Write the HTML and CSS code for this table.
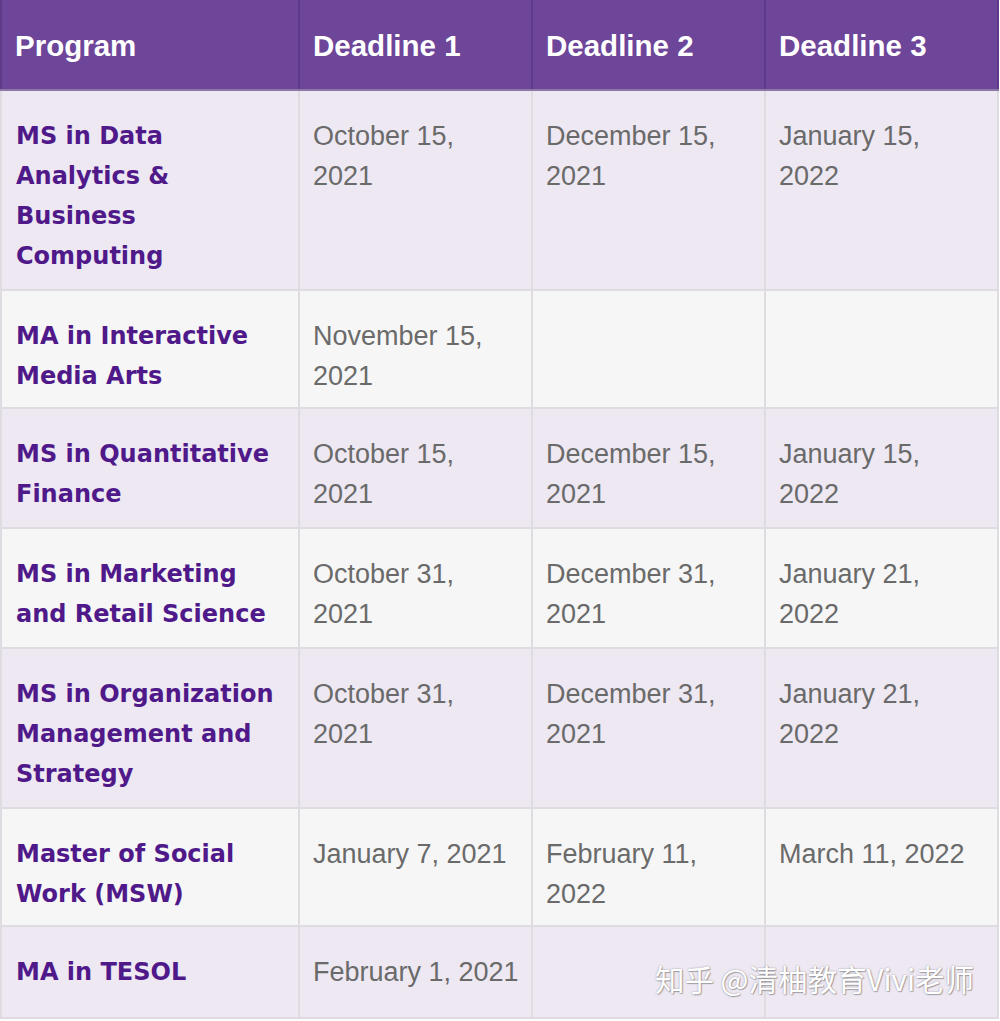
FILE: index.html
```html
<!DOCTYPE html>
<html>
<head>
<meta charset="utf-8">
<link rel="stylesheet" href="styles.css">
</head>
<body>
<div class="wrap">
<table class="deadlines">
  <colgroup>
    <col class="c-prog">
    <col class="c-date">
    <col class="c-date">
    <col class="c-date">
  </colgroup>
  <thead>
    <tr><th>Program</th><th>Deadline 1</th><th>Deadline 2</th><th>Deadline 3</th></tr>
  </thead>
  <tbody>
    <tr class="odd"><td class="prog">MS in Data Analytics &amp; Business Computing</td><td>October 15, 2021</td><td>December 15, 2021</td><td>January 15, 2022</td></tr>
    <tr class="even tight"><td class="prog">MA in Interactive Media Arts</td><td>November 15, 2021</td><td></td><td></td></tr>
    <tr class="odd"><td class="prog">MS in Quantitative Finance</td><td>October 15, 2021</td><td>December 15, 2021</td><td>January 15, 2022</td></tr>
    <tr class="even"><td class="prog">MS in Marketing and Retail Science</td><td>October 31, 2021</td><td>December 31, 2021</td><td>January 21, 2022</td></tr>
    <tr class="odd"><td class="prog">MS in Organization Management and Strategy</td><td>October 31, 2021</td><td>December 31, 2021</td><td>January 21, 2022</td></tr>
    <tr class="even tight"><td class="prog">Master of Social Work (MSW)</td><td>January 7, 2021</td><td>February 11, 2022</td><td>March 11, 2022</td></tr>
    <tr class="odd last"><td class="prog">MA in TESOL</td><td>February 1, 2021</td><td></td><td></td></tr>
  </tbody>
</table>
<div class="watermark">知乎 @清柚教育Vivi老师</div>
</div>
</body>
</html>
```

FILE: styles.css
```css
html, body {
  margin: 0;
  padding: 0;
  background: #ffffff;
}
.wrap {
  position: relative;
  width: 1000px;
  height: 1021px;
  overflow: hidden;
}
.deadlines {
  border-collapse: collapse;
  table-layout: fixed;
  width: 998px;
  font-family: "Liberation Sans", Arial, sans-serif;
}
.c-prog { width: 298px; }
.c-date { width: 233px; }
.deadlines th {
  background: #6d4599;
  color: #ffffff;
  font-weight: 700;
  font-size: 29.5px;
  line-height: 40px;
  text-align: left;
  padding: 26px 11px 23px 13px;
  border-left: 2px solid #5e3a88;
  border-right: 2px solid #5e3a88;
  border-bottom: 2px solid #8c78a6;
  vertical-align: middle;
}
.deadlines td {
  font-size: 27px;
  line-height: 40px;
  color: #6a6a6a;
  padding: 25px 11px 13px 13px;
  border: 2px solid #dedbe1;
  vertical-align: top;
}
.deadlines td.prog {
  font-family: "DejaVu Sans", "Liberation Sans", sans-serif;
  font-weight: 700;
  font-size: 24px;
  color: #50198a;
  padding-left: 14px;
}
.odd td { background: #ede8f2; }
.even td { background: #f6f6f6; }
.tight td { padding-bottom: 11px; }
.last td { padding-bottom: 25px; }
.watermark {
  position: absolute;
  left: 655px;
  top: 958px;
  font-family: "Noto Sans CJK SC", "Liberation Sans", sans-serif;
  font-size: 29.5px;
  line-height: 40px;
  color: #ffffff;
  text-shadow: 0 0 2px rgba(0,0,0,0.35), 1px 1px 1px rgba(0,0,0,0.25);
  white-space: nowrap;
}
```
